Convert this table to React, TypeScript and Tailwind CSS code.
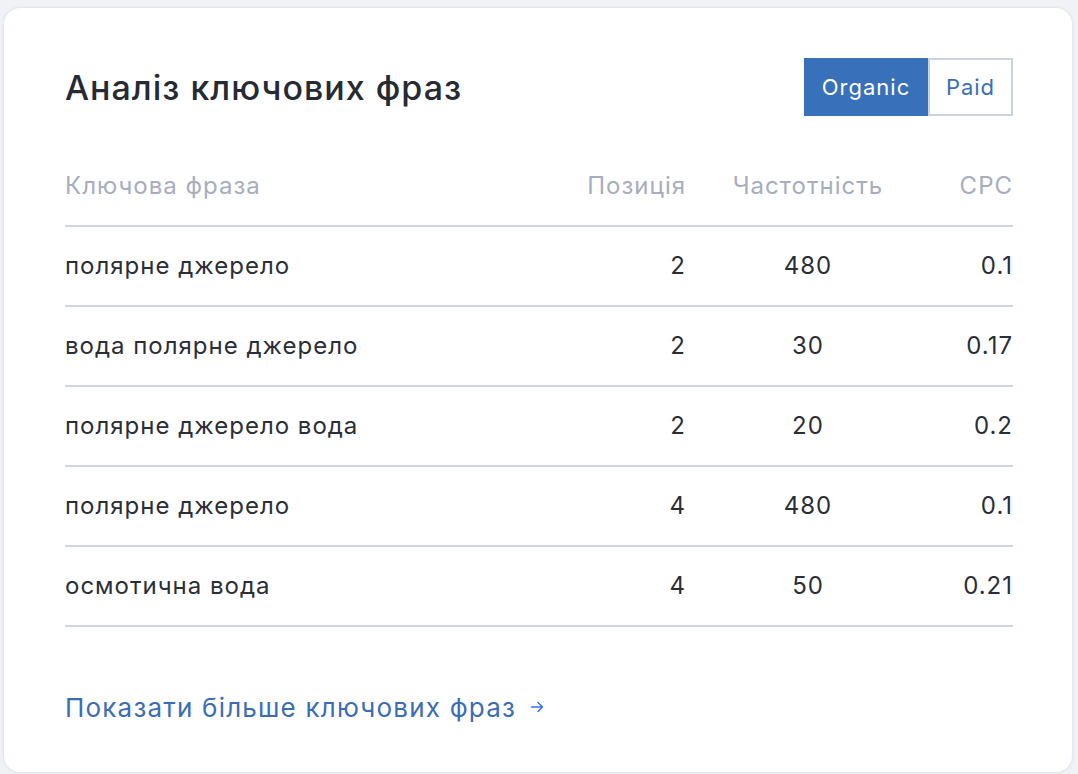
import React from 'react';

interface Row {
  phrase: string;
  position: number;
  volume: number;
  cpc: string;
}

const rows: Row[] = [
  { phrase: 'полярне джерело', position: 2, volume: 480, cpc: '0.1' },
  { phrase: 'вода полярне джерело', position: 2, volume: 30, cpc: '0.17' },
  { phrase: 'полярне джерело вода', position: 2, volume: 20, cpc: '0.2' },
  { phrase: 'полярне джерело', position: 4, volume: 480, cpc: '0.1' },
  { phrase: 'осмотична вода', position: 4, volume: 50, cpc: '0.21' },
];

const gridCols = 'grid grid-cols-[501px_120px_244px_83px] items-center';

const App: React.FC = () => {
  return (
    <div className="min-h-[774px] bg-[#f0f2f6] pt-[8px] pl-[4px] font-['Inter','Noto_Sans',sans-serif]">
      <div className="w-[1068px] h-[764px] bg-white rounded-[16px] shadow-[0_0_3px_rgba(150,160,185,0.35)] px-[61px] pt-[50px]">
        <div className="flex items-center justify-between w-[948px]">
          <h2 className="text-[34px] font-medium text-[#262a33] tracking-[1px]">Аналіз ключових фраз</h2>
          <div className="flex h-[58px]">
            <button className="w-[124px] h-full bg-[#3870ba] text-white text-[22px] tracking-[1px]">Organic</button>
            <button className="w-[85px] h-full border-2 border-[#cbd3df] text-[#3a6db5] text-[22px] tracking-[1px]">Paid</button>
          </div>
        </div>

        <div className="mt-[31px] w-[948px]">
          <div className={`${gridCols} h-[80px] border-b-2 border-[#cdd5e0] text-[24px] tracking-[1px] text-[#a6adbf]`}>
            <span>Ключова фраза</span>
            <span className="text-right">Позиція</span>
            <span className="text-center">Частотність</span>
            <span className="text-right">CPC</span>
          </div>
          {rows.map((row, i) => (
            <div key={i} className={`${gridCols} h-[80px] border-b-2 border-[#cdd5e0] text-[24px] tracking-[1px] text-[#2a2e37]`}>
              <span>{row.phrase}</span>
              <span className="text-right">{row.position}</span>
              <span className="text-center">{row.volume}</span>
              <span className="text-right">{row.cpc}</span>
            </div>
          ))}
          <div className="h-[160px] flex items-center">
            <a href="#" className="flex items-center gap-[14px] text-[26px] tracking-[1.2px] text-[#3a6db5]">
              Показати більше ключових фраз
              <svg width="14" height="14" viewBox="0 0 14 14" fill="none" stroke="#3d6ff0" strokeWidth="1.5" strokeLinecap="round" strokeLinejoin="round">
                <path d="M1.5 7h11M8 2.5L12.5 7 8 11.5" />
              </svg>
            </a>
          </div>
        </div>
      </div>
    </div>
  );
};

export default App;
